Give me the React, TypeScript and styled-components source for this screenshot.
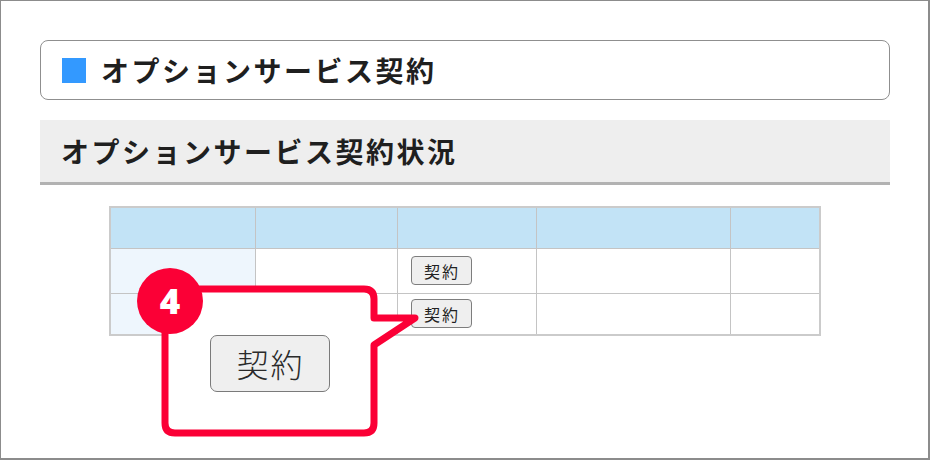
import React from "react";
import styled, { createGlobalStyle } from "styled-components";

const Global = createGlobalStyle`
  html, body { margin: 0; padding: 0; background: #fff; }
  body { font-family: "Noto Sans CJK JP", "Noto Sans", sans-serif; }
  * { box-sizing: border-box; }
`;

const Frame = styled.div`
  position: relative;
  width: 930px;
  height: 460px;
  border: 1px solid #8c8c8c;
  border-right-width: 2px;
  border-bottom-width: 2px;
  padding: 39px 38px 0 39px;
  display: flex;
  flex-direction: column;
  align-items: stretch;
  overflow: hidden;
`;

const TitleBox = styled.div`
  height: 60px;
  border: 1px solid #8f8f8f;
  border-radius: 8px;
  display: flex;
  align-items: center;
  padding-left: 21px;
  gap: 15px;
`;

const BlueSquare = styled.span`
  width: 24px;
  height: 25px;
  background: #3399ff;
  flex: none;
`;

const Heading = styled.h1`
  margin: 0;
  font-size: 28px;
  font-weight: 700;
  letter-spacing: 2.5px;
  color: #1f1f1f;
  line-height: 1;
`;

const Band = styled.div`
  margin-top: 20px;
  height: 65px;
  background: #eeeeee;
  border-bottom: 3px solid #b2b2b2;
  display: flex;
  align-items: center;
  padding-left: 21px;
  padding-bottom: 1px;
`;

const TableWrap = styled.div`
  margin-top: 21px;
  display: flex;
  justify-content: center;
`;

const Table = styled.table`
  border-collapse: collapse;
  border: 2px solid #cbcbcb;
  width: 712px;
`;

const HeadCell = styled.td<{ $w: number }>`
  width: ${(p) => p.$w}px;
  height: 41px;
  background: #c2e3f6;
  border: 1px solid #c4c4c4;
  padding: 0;
`;

const Cell = styled.td<{ $first?: boolean; $h: number }>`
  height: ${(p) => p.$h}px;
  background: ${(p) => (p.$first ? "#eef6fd" : "#fff")};
  border: 1px solid #c4c4c4;
  padding: 0 0 0 13px;
  vertical-align: middle;
`;

const SmallButton = styled.button`
  width: 61px;
  height: 29px;
  border: 1px solid #7d7d7d;
  border-radius: 4px;
  background: #efefef;
  font-family: "Noto Sans CJK JP", sans-serif;
  font-size: 16px;
  color: #222;
  letter-spacing: 2px;
  padding: 0 0 0 2px;
  display: flex;
  align-items: center;
  justify-content: center;
  line-height: 1;
`;

const Callout = styled.div`
  position: absolute;
  left: 160px;
  top: 284px;
  width: 217px;
  height: 152px;
  display: flex;
  align-items: center;
  justify-content: center;
  z-index: 2;
`;

const CalloutShape = styled.svg`
  position: absolute;
  left: 0;
  top: 0;
  overflow: visible;
  z-index: -1;
`;

const Badge = styled.div`
  position: absolute;
  left: -24px;
  top: -17px;
  width: 66px;
  height: 66px;
  border-radius: 50%;
  background: #fb0036;
  color: #fff;
  font-family: "Noto Sans", "DejaVu Sans", sans-serif;
  font-weight: 900;
  font-size: 35px;
  display: flex;
  align-items: center;
  justify-content: center;
  line-height: 1;
  padding-bottom: 2px;
`;

const BigButton = styled.button`
  width: 120px;
  height: 57px;
  margin-top: 4px;
  border: 1px solid #7a7a7a;
  border-radius: 7px;
  background: #efefef;
  font-family: "Noto Sans CJK JP", sans-serif;
  font-weight: 300;
  font-size: 32px;
  color: #2a2a2a;
  letter-spacing: 2px;
  padding: 0 0 0 2px;
  display: flex;
  align-items: center;
  justify-content: center;
  line-height: 1;
`;

const widths = [146, 142, 140, 194, 90];

export default function App() {
  return (
    <>
      <Global />
      <Frame>
        <TitleBox>
          <BlueSquare />
          <Heading>オプションサービス契約</Heading>
        </TitleBox>
        <Band>
          <Heading>オプションサービス契約状況</Heading>
        </Band>
        <TableWrap>
          <Table>
            <tbody>
              <tr>
                {widths.map((w, i) => (
                  <HeadCell key={i} $w={w} />
                ))}
              </tr>
              {[45, 42].map((h, r) => (
                <tr key={r}>
                  <Cell $first $h={h} />
                  <Cell $h={h} />
                  <Cell $h={h}>
                    <SmallButton>契約</SmallButton>
                  </Cell>
                  <Cell $h={h} />
                  <Cell $h={h} />
                </tr>
              ))}
            </tbody>
          </Table>
        </TableWrap>
        <Callout>
          <CalloutShape width="217" height="152" viewBox="0 0 217 152">
            <path
              d="M10 4 H203 Q213 4 213 14 V33 H254 L213 60 V138 Q213 148 203 148 H14 Q4 148 4 138 V14 Q4 4 14 4 Z"
              fill="#fff"
              stroke="#fb0036"
              strokeWidth="7"
              strokeLinejoin="round"
            />
          </CalloutShape>
          <Badge>4</Badge>
          <BigButton>契約</BigButton>
        </Callout>
      </Frame>
    </>
  );
}
